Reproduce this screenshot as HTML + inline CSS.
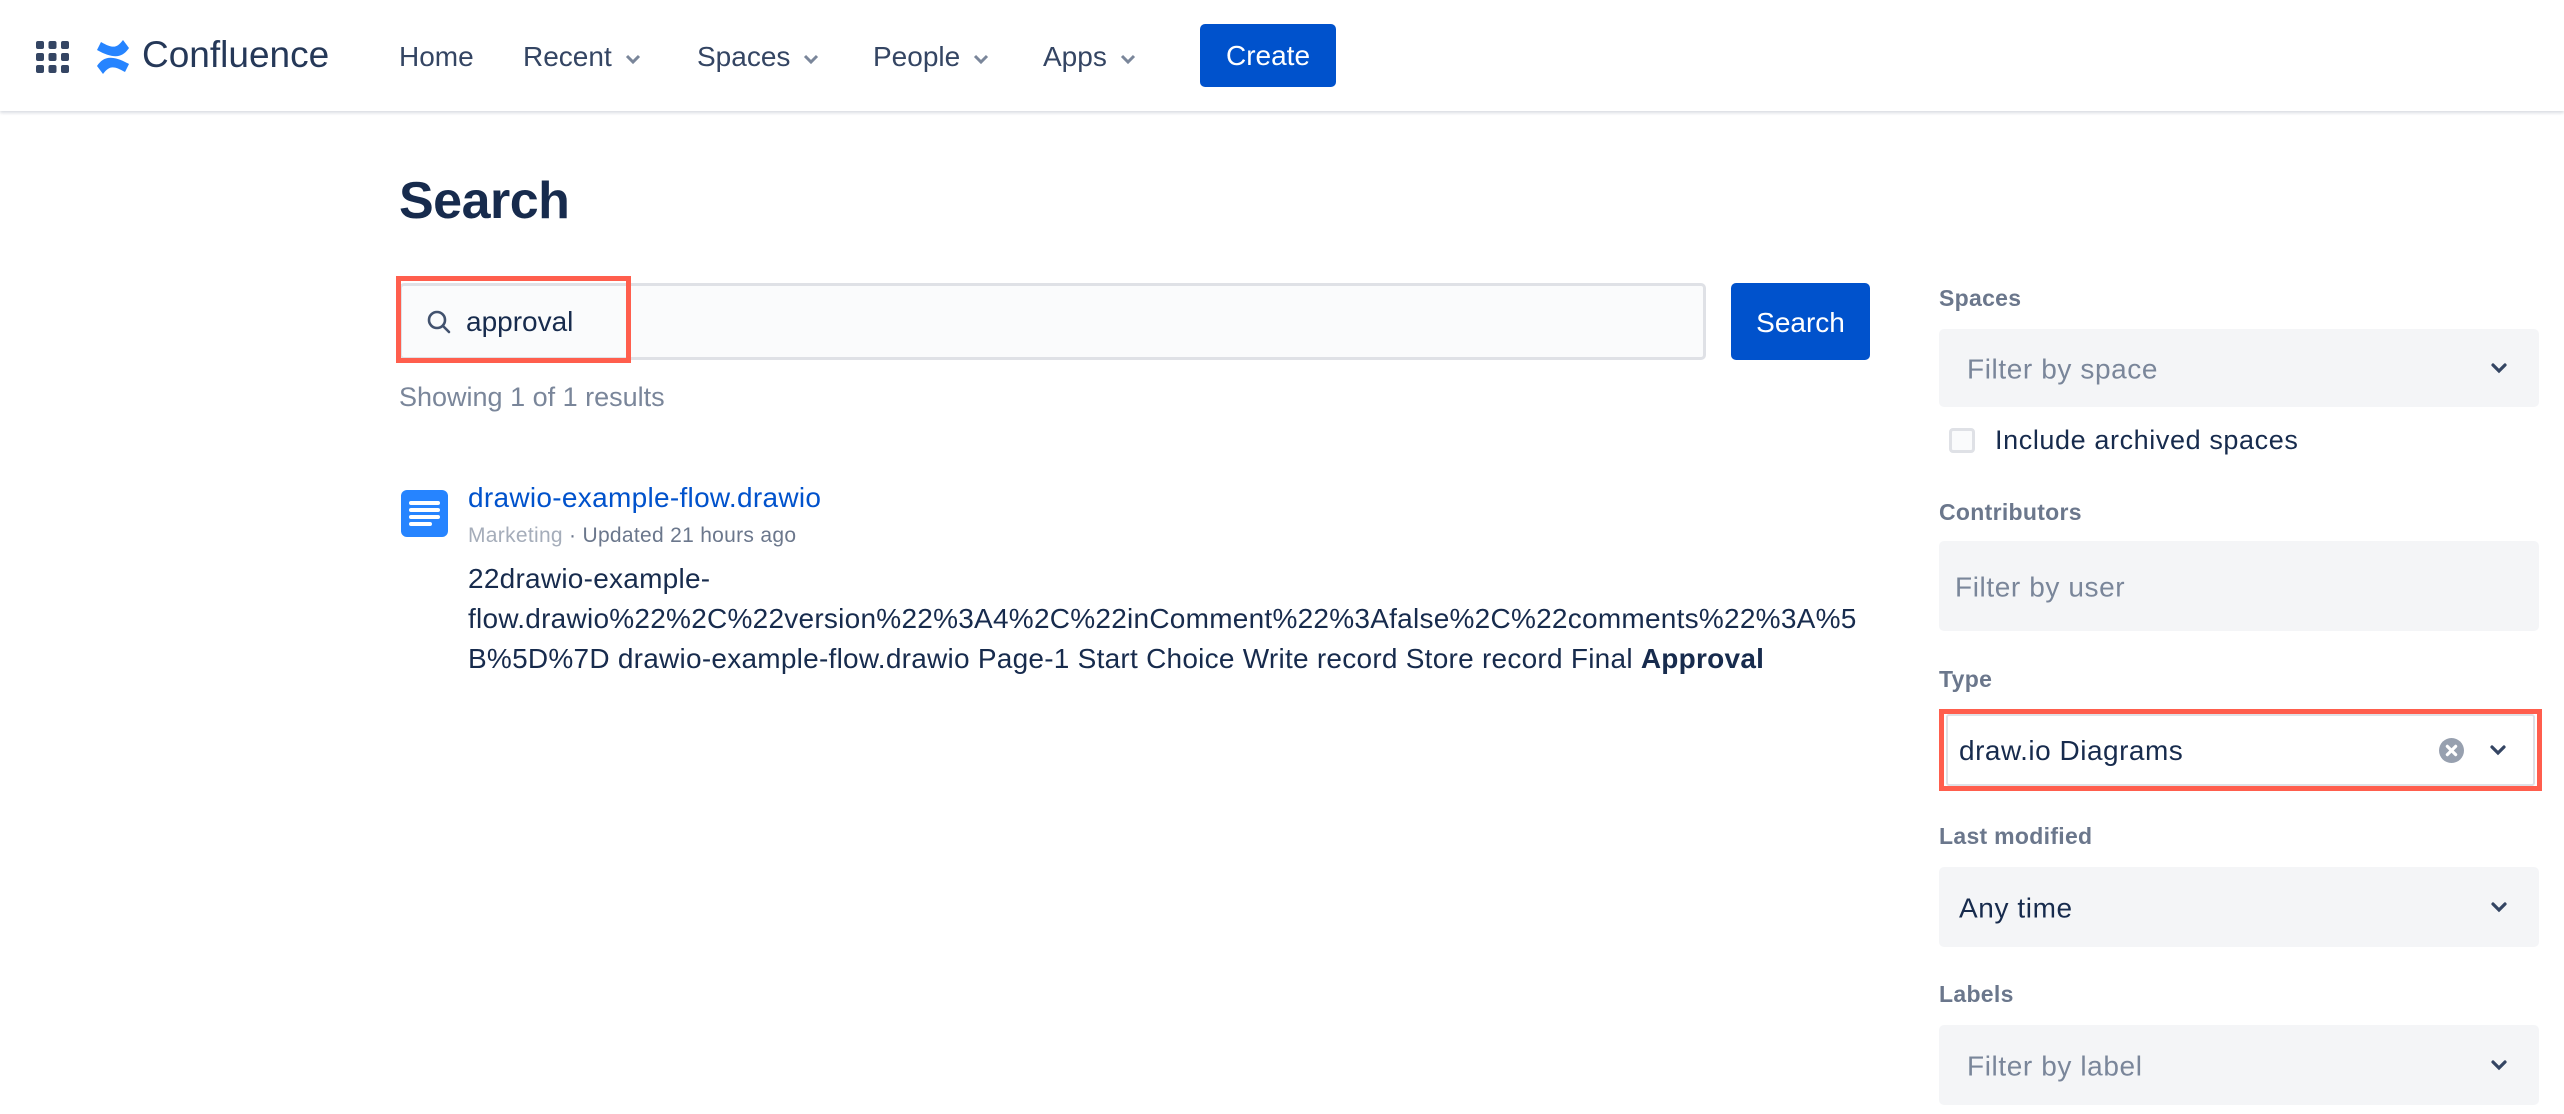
<!DOCTYPE html>
<html><head><meta charset="utf-8"><style>
*{margin:0;padding:0;box-sizing:border-box}
body{width:2564px;height:1114px;background:#fff;font-family:"Liberation Sans",Arial,sans-serif;color:#172B4D;position:relative;overflow:hidden}
.a{position:absolute;white-space:nowrap}
.hdr{position:absolute;left:0;top:0;width:2564px;height:111px;background:#fff;box-shadow:0 2px 3px rgba(9,30,66,.15)}
.nav{font-size:28px;color:#344563;top:41px}
.chev{display:inline-block;margin-left:12px;vertical-align:middle}
.lbl{font-size:23px;font-weight:bold;color:#6B778C;left:1939px;letter-spacing:0.3px}
.box{position:absolute;left:1939px;width:600px;background:#F4F5F7;border-radius:5px}
.ph{font-size:28px;color:#7A869A;position:absolute;top:50%;transform:translateY(-45%);letter-spacing:0.6px}
.dd{position:absolute;right:30px;top:50%;transform:translateY(-50%)}
.body{font-size:28px;color:#172B4D;left:468px;letter-spacing:0.25px}
</style></head><body>
<div class="hdr"></div>
<svg class="a" style="left:36px;top:41px" width="33" height="32" viewBox="0 0 33 32" fill="#344563">
<rect x="0" y="0" width="8" height="8" rx="2"/><rect x="12.5" y="0" width="8" height="8" rx="2"/><rect x="25" y="0" width="8" height="8" rx="2"/>
<rect x="0" y="12" width="8" height="8" rx="2"/><rect x="12.5" y="12" width="8" height="8" rx="2"/><rect x="25" y="12" width="8" height="8" rx="2"/>
<rect x="0" y="24" width="8" height="8" rx="2"/><rect x="12.5" y="24" width="8" height="8" rx="2"/><rect x="25" y="24" width="8" height="8" rx="2"/></svg>
<svg class="a" style="left:95px;top:40px" width="36" height="34" viewBox="0 0 36 34">
<path d="M2 26c6-9 14-12 32 -2l-4 8c-12-7-16-6-22 2z" fill="#2684FF"/>
<path d="M34 8c-6 9-14 12-32 2l4-8c12 7 16 6 22-2z" fill="#2684FF"/></svg>
<div class="a" style="left:142px;top:34px;font-size:37px;color:#253858">Confluence</div>
<div class="a nav" style="left:399px">Home</div>
<div class="a nav" style="left:523px">Recent<svg class="chev" width="18" height="12" viewBox="0 0 18 12"><path d="M3 3l6 6 6-6" stroke="#7A869A" stroke-width="3" fill="none"/></svg></div>
<div class="a nav" style="left:697px">Spaces<svg class="chev" width="18" height="12" viewBox="0 0 18 12"><path d="M3 3l6 6 6-6" stroke="#7A869A" stroke-width="3" fill="none"/></svg></div>
<div class="a nav" style="left:873px">People<svg class="chev" width="18" height="12" viewBox="0 0 18 12"><path d="M3 3l6 6 6-6" stroke="#7A869A" stroke-width="3" fill="none"/></svg></div>
<div class="a nav" style="left:1043px">Apps<svg class="chev" width="18" height="12" viewBox="0 0 18 12"><path d="M3 3l6 6 6-6" stroke="#7A869A" stroke-width="3" fill="none"/></svg></div>
<div class="a" style="left:1200px;top:24px;width:136px;height:63px;background:#0052CC;border-radius:5px;color:#fff;font-size:28px;line-height:63px;text-align:center">Create</div>

<div class="a" style="left:399px;top:171px;font-size:52px;font-weight:bold;color:#172B4D;letter-spacing:-0.5px">Search</div>

<div class="a" style="left:399px;top:283px;width:1307px;height:77px;background:#FAFBFC;border:3px solid #DFE1E6;border-radius:5px"></div>
<div class="a" style="left:396px;top:276px;width:235px;height:87px;border:5px solid #FF5E4D"></div>
<svg class="a" style="left:426px;top:309px" width="26" height="26" viewBox="0 0 26 26"><circle cx="11" cy="11" r="8" stroke="#42526E" stroke-width="2.6" fill="none"/><path d="M17 17l6 6" stroke="#42526E" stroke-width="2.6" stroke-linecap="round"/></svg>
<div class="a" style="left:466px;top:306px;font-size:28px;color:#172B4D">approval</div>
<div class="a" style="left:1731px;top:283px;width:139px;height:77px;background:#0052CC;border-radius:5px;color:#fff;font-size:28px;line-height:79px;text-align:center">Search</div>
<div class="a" style="left:399px;top:382px;font-size:27px;color:#7A869A">Showing 1 of 1 results</div>

<svg class="a" style="left:401px;top:490px" width="47" height="47" viewBox="0 0 47 47"><rect width="47" height="47" rx="6" fill="#2684FF"/><g stroke="#fff" stroke-width="4" stroke-linecap="round"><path d="M10 13h27M10 20h27M10 27h27M10 34h19"/></g></svg>
<div class="a" style="left:468px;top:482px;font-size:28px;color:#0052CC;letter-spacing:0.3px">drawio-example-flow.drawio</div>
<div class="a" style="left:468px;top:524px;font-size:21px;color:#A5ADBA;letter-spacing:0.3px">Marketing <span style="color:#6B778C">· Updated 21 hours ago</span></div>
<div class="a body" style="top:563px">22drawio-example-</div>
<div class="a body" style="top:603px">flow.drawio%22%2C%22version%22%3A4%2C%22inComment%22%3Afalse%2C%22comments%22%3A%5</div>
<div class="a body" style="top:643px">B%5D%7D drawio-example-flow.drawio Page-1 Start Choice Write record Store record Final <b>Approval</b></div>

<div class="a lbl" style="top:285px">Spaces</div>
<div class="box" style="top:329px;height:78px"><span class="ph" style="left:28px">Filter by space</span><svg class="dd" width="20" height="14" viewBox="0 0 20 14"><path d="M4 4l6 6 6-6" stroke="#344563" stroke-width="3.2" fill="none" stroke-linecap="round"/></svg></div>
<div class="a" style="left:1949px;top:428px;width:26px;height:25px;border:3px solid #DFE1E6;border-radius:4px;background:#FAFBFC"></div>
<div class="a" style="left:1995px;top:425px;font-size:27px;color:#172B4D;letter-spacing:0.6px">Include archived spaces</div>
<div class="a lbl" style="top:499px">Contributors</div>
<div class="box" style="top:541px;height:90px"><span class="ph" style="left:16px">Filter by user</span></div>
<div class="a lbl" style="top:666px">Type</div>
<div class="a" style="left:1939px;top:709px;width:603px;height:82px;border:5px solid #FF5E4D;background:#fff"><div style="position:absolute;left:2px;top:0;right:2px;bottom:0;border:2px solid #DFE1E6;border-radius:3px"></div></div>
<div class="a" style="left:1959px;top:735px;font-size:28px;color:#172B4D;letter-spacing:0.5px">draw.io Diagrams</div>
<svg class="a" style="left:2439px;top:738px" width="25" height="25" viewBox="0 0 24 24"><circle cx="12" cy="12" r="12" fill="#97A0AF"/><path d="M8 8l8 8M16 8l-8 8" stroke="#fff" stroke-width="3" stroke-linecap="round"/></svg>
<svg class="a" style="left:2488px;top:743px" width="20" height="14" viewBox="0 0 20 14"><path d="M4 4l6 6 6-6" stroke="#344563" stroke-width="3.2" fill="none" stroke-linecap="round"/></svg>
<div class="a lbl" style="top:823px">Last modified</div>
<div class="box" style="top:867px;height:80px"><span class="ph" style="left:20px;color:#172B4D">Any time</span><svg class="dd" width="20" height="14" viewBox="0 0 20 14"><path d="M4 4l6 6 6-6" stroke="#344563" stroke-width="3.2" fill="none" stroke-linecap="round"/></svg></div>
<div class="a lbl" style="top:981px">Labels</div>
<div class="box" style="top:1025px;height:80px"><span class="ph" style="left:28px">Filter by label</span><svg class="dd" width="20" height="14" viewBox="0 0 20 14"><path d="M4 4l6 6 6-6" stroke="#344563" stroke-width="3.2" fill="none" stroke-linecap="round"/></svg></div>
</body></html>
